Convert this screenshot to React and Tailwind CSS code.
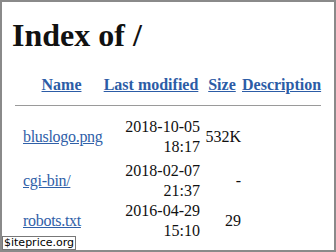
import React from "react";

const rows = [
  { name: "bluslogo.png", date: "2018-10-05", time: "18:17", size: "532K" },
  { name: "cgi-bin/", date: "2018-02-07", time: "21:37", size: "-" },
  { name: "robots.txt", date: "2016-04-29", time: "15:10", size: "29" },
];

function App() {
  return (
    <div className="relative w-[336px] h-[252px] overflow-hidden bg-white border-2 border-[#8a8a8a] text-[#111] font-['Liberation_Serif',serif]">
      <h1 className="ml-[10px] mt-[15px] text-[32px] leading-[36px] font-bold">Index of /</h1>

      <div className="ml-[13px] mt-[22px] w-[306px]">
        {/* header */}
        <div className="grid grid-cols-[8px_77px_102px_40px_79px] text-[16px] leading-[20px] font-bold">
          <div></div>
          <a href="#" className="text-center text-[#2c5ca6] underline">Name</a>
          <a href="#" className="text-center text-[#2c5ca6] underline">Last modified</a>
          <a href="#" className="text-center text-[#2c5ca6] underline">Size</a>
          <a href="#" className="text-center text-[#2c5ca6] underline">Description</a>
        </div>
        <div className="mt-[10px] h-[1px] bg-[#9a9a9a]"></div>

        <div className="mt-[11px] flex flex-col">
          {rows.map((r, i) => (
            <div
              key={r.name}
              className={
                "grid grid-cols-[8px_77px_100px_41px_80px] items-center text-[16px] leading-[20px] " +
                (i === 1 ? "mt-[4px]" : "")
              }
            >
              <div></div>
              <a href="#" className="text-[#2f60a8] underline tracking-[-0.3px]">{r.name}</a>
              <div className="text-right">
                <div>{r.date}</div>
                <div>{r.time}</div>
              </div>
              <div className="text-right">{r.size}</div>
              <div></div>
            </div>
          ))}
        </div>
      </div>

      <div className="absolute left-0 bottom-0 px-[1px] border border-[#777] bg-white font-['DejaVu_Sans',sans-serif] text-[11px] leading-[12px] text-black">
        $iteprice.org
      </div>
    </div>
  );
}

export default App;
